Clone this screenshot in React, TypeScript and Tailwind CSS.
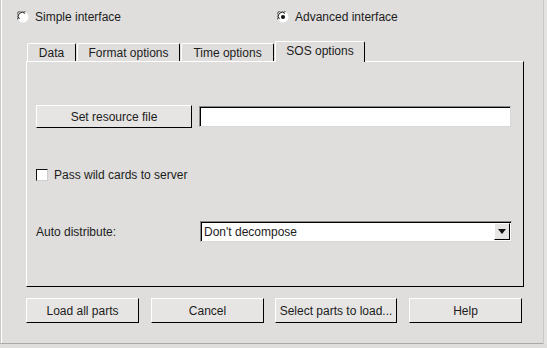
import React from "react";

function Radio({ checked }: { checked?: boolean }) {
  return (
    <svg width="12" height="12" viewBox="0 0 12 12" className="shrink-0">
      <circle cx="6" cy="6" r="5.5" fill="#ffffff" />
      <path d="M1.2 8.5 A5 5 0 0 1 8.5 1.2" stroke="#7a7a7a" strokeWidth="1.2" fill="none" />
      <path d="M2.4 8 A3.8 3.8 0 0 1 8 2.4" stroke="#111" strokeWidth="1" fill="none" />
      {checked && <circle cx="6" cy="6" r="2" fill="#111" />}
    </svg>
  );
}

function Tab({ label, width, active }: { label: string; width: string; active?: boolean }) {
  if (active) {
    return (
      <div
        className={`${width} h-[21px] -mb-px relative z-10 bg-[#dfdedc] border-t border-l border-white border-r border-r-black rounded-tl-[2px] rounded-tr-[2px] flex items-center justify-center pb-[3px]`}
      >
        {label}
      </div>
    );
  }
  return (
    <div
      className={`${width} h-[18px] bg-[#dfdedc] border-t border-l border-white border-r border-r-black rounded-tl-[2px] rounded-tr-[2px] flex items-center justify-center`}
    >
      {label}
    </div>
  );
}

function Button({ label, width }: { label: string; width: string }) {
  return (
    <div
      className={`${width} h-[25px] bg-[#e6e5e3] border border-t-white border-l-white border-r-black border-b-black flex items-center justify-center`}
    >
      {label}
    </div>
  );
}

export default function App() {
  return (
    <div
      className="w-[547px] h-[348px] bg-[#dfdedc] text-[12px] text-[#1c1c1c] flex"
      style={{ fontFamily: '"Liberation Sans", Arial, sans-serif' }}
    >
      <div className="w-[543px] h-[344px] border-l border-l-[#c9c8c6] border-b border-b-[#a9a8a6]">
        <div className="h-full border-l border-l-white flex flex-col">
          {/* Interface mode */}
          <div className="mt-[10px] h-[13px] flex items-center">
            <div className="ml-[15px] flex items-center gap-[6px] w-[260px]">
              <Radio />
              <span>Simple interface</span>
            </div>
            <div className="flex items-center gap-[6px]">
              <Radio checked />
              <span>Advanced interface</span>
            </div>
          </div>

          {/* Tabs */}
          <div className="mt-[18px] ml-[25px] h-[20px] flex items-end gap-px">
            <Tab label="Data" width="w-[49px]" />
            <Tab label="Format options" width="w-[103px]" />
            <Tab label="Time options" width="w-[93px]" />
            <Tab label="SOS options" width="w-[90px]" active />
          </div>

          {/* Panel */}
          <div className="ml-[24px] w-[498px] h-[226px] border-t border-l border-white border-r border-b border-r-black border-b-black flex flex-col pl-[9px]">
            <div className="mt-[43px] flex items-center">
              <div className="w-[156px] h-[23px] bg-[#e6e5e3] border border-t-white border-l-white border-r-black border-b-black flex items-center justify-center">
                Set resource file
              </div>
              <div className="ml-[7px] w-[312px] h-[21px] bg-white border border-t-[#8a8a8a] border-l-[#8a8a8a] border-r-[#d8d8d8] border-b-[#d8d8d8] shadow-[inset_1px_1px_0_#000]" />
            </div>

            <div className="mt-[38px] flex items-center gap-[6px]">
              <div className="w-[12px] h-[12px] bg-white border border-t-[#111] border-l-[#111] border-r-[#cfcfcf] border-b-[#cfcfcf]" />
              <span>Pass wild cards to server</span>
            </div>

            <div className="mt-[37px] flex items-center">
              <span className="w-[164px]">Auto distribute:</span>
              <div className="w-[312px] h-[21px] bg-white border border-t-[#8a8a8a] border-l-[#8a8a8a] border-r-[#d8d8d8] border-b-[#d8d8d8] shadow-[inset_1px_1px_0_#000] flex items-center justify-between pl-[3px] pr-px">
                <span>Don't decompose</span>
                <div className="w-[16px] h-[17px] bg-[#e6e5e3] border border-t-white border-l-white border-r-black border-b-black flex items-center justify-center">
                  <svg width="8" height="5" viewBox="0 0 8 5">
                    <path d="M0 0 H8 L4 5 Z" fill="#111" />
                  </svg>
                </div>
              </div>
            </div>
          </div>

          {/* Action buttons */}
          <div className="mt-[11px] ml-[24px] flex">
            <Button label="Load all parts" width="w-[113px]" />
            <div className="ml-[12px]">
              <Button label="Cancel" width="w-[113px]" />
            </div>
            <div className="ml-[11px]">
              <Button label="Select parts to load..." width="w-[122px]" />
            </div>
            <div className="ml-[12px]">
              <Button label="Help" width="w-[113px]" />
            </div>
          </div>
        </div>
      </div>
      <div className="w-[4px] h-[344px] border-l border-l-[#c9c8c6] bg-[#e4e3e1]" />
    </div>
  );
}
